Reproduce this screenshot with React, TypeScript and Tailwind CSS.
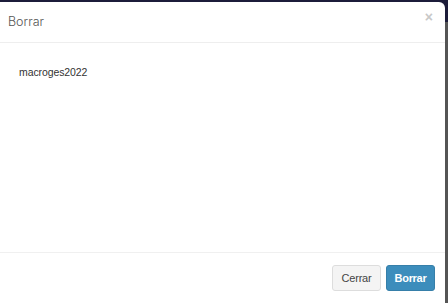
export default function App() {
  return (
    <div className="flex h-[303px] w-[448px] flex-col bg-[#555555] pt-[2px]">
      <div className="absolute left-0 top-0 h-[22px] w-[448px] bg-[#1c1c3a]" />
      <div className="relative flex w-[445px] flex-1 flex-col rounded-tr-[6px] bg-white">
        <div className="flex h-[41px] items-center justify-between border-b border-[#eeeeee] pl-[8px] pr-[12px]">
          <h4 className="font-['Inter',sans-serif] text-[12.5px] font-light text-[#555555]">Borrar</h4>
          <span className="-mt-[9px] font-['Liberation_Sans',sans-serif] text-[14px] font-bold text-[#c8c8c8]">×</span>
        </div>
        <div className="flex-1 px-[19px] pt-[22px]">
          <p className="font-['Liberation_Sans',sans-serif] text-[10.5px] tracking-[-0.1px] text-[#333333]">macroges2022</p>
        </div>
        <div className="flex h-[51px] items-center justify-end gap-[5px] border-t border-[#f0f0f0] pr-[11px]">
          <button className="h-[26px] w-[49px] rounded-[3px] border border-[#dddddd] bg-[#f4f4f4] font-['Liberation_Sans',sans-serif] text-[11px] tracking-[-0.2px] text-[#444444]">
            Cerrar
          </button>
          <button className="mr-[-1px] h-[26px] w-[49px] rounded-[3px] border border-[#367fa9] bg-[#3c8dbc] font-['Liberation_Sans',sans-serif] text-[11px] font-bold tracking-[-0.3px] text-white">
            Borrar
          </button>
        </div>
      </div>
    </div>
  )
}
